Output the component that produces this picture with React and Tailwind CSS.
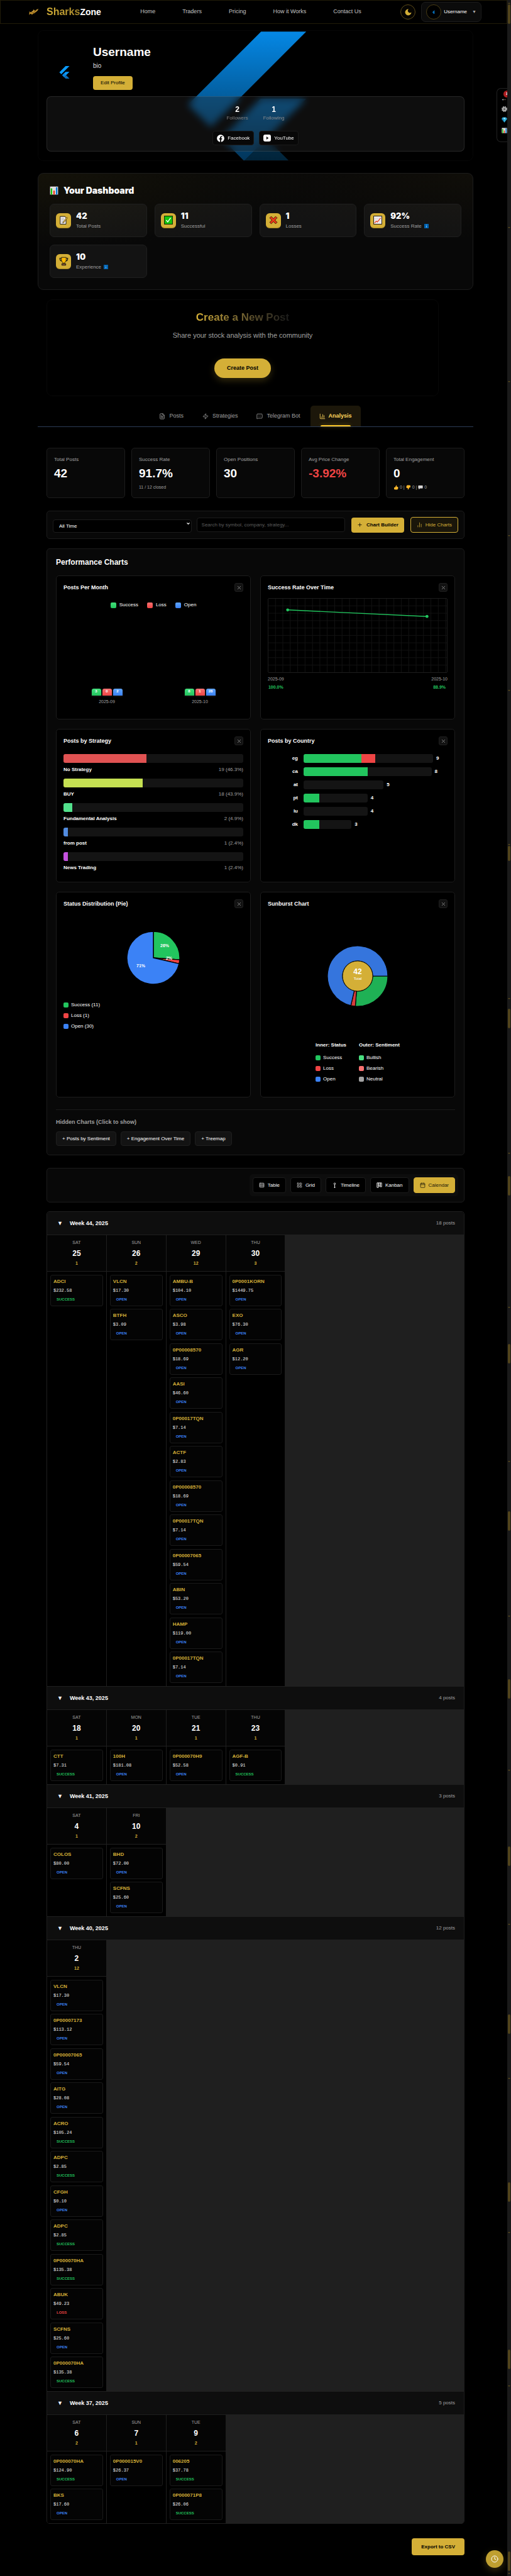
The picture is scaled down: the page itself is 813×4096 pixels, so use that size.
import React from "react";
import { FileText, Zap, MessageSquareMore, ChartColumn, ChartNoAxesColumn, Plus, Rows4, LayoutGrid, Calendar, Clock, ChevronDown, X } from "lucide-react";
import { FaFacebook } from "react-icons/fa";

/* ---------- drawings ---------- */

function FlutterMark({ className }) {
  return (
    <svg viewBox="0 0 256 317" className={className} aria-hidden="true">
      <path d="M157.7 0 0 157.7l48.8 48.8L255.3 0z" fill="#0a9bff" />
      <path d="M156.6 145.4 72.1 229.8l49 49.7 48.7-48.7 85.5-85.4z" fill="#0a9bff" />
      <path d="m121.1 279.5 37.1 37.1h97.1l-85.5-85.8z" fill="#0a6cb8" />
      <path d="m71.6 230.4 48.8-48.8 49.4 49.2-48.7 48.7z" fill="#0b82dc" />
    </svg>
  );
}

function CoverArt() {
  return (
    <svg viewBox="0 0 693 208" preserveAspectRatio="xMidYMid slice" className="absolute inset-0 h-full w-full" aria-hidden="true">
      <defs>
        <linearGradient id="shade" x1="0" y1="0" x2="0" y2="1">
          <stop offset="0" stopColor="#000" stopOpacity="0.08" />
          <stop offset="1" stopColor="#000" stopOpacity="0.64" />
        </linearGradient>
      </defs>
      <g transform="translate(239 2) scale(0.738)">
        <path d="M157.7 0 0 157.7l48.8 48.8L255.3 0z" fill="#0594fa" />
        <path d="M156.6 145.4 72.1 229.8l49 49.7 48.7-48.7 85.5-85.4z" fill="#0594fa" />
        <path d="m121.1 279.5 37.1 37.1h97.1l-85.5-85.8z" fill="#04639f" />
      </g>
      <rect width="693" height="208" fill="url(#shade)" />
    </svg>
  );
}

function SharkLogo() {
  return (
    <svg viewBox="0 0 30 22" className="h-[12px] w-[16px]" aria-hidden="true">
      <path d="M1 9c2 1 3 3 5 3 3-1 4-4 7-5l1-4 3 4c3 0 4-2 7-4l1 1 3-3c0 4-4 8-8 11-2 2-5 3-8 4l-3 4-1-3c-2 0-3-1-4-1-1 2-2 3-3 4l0-5C2 13 2 11 1 9z" fill="#c8952c" />
      <path d="M7 13c5 1 9-2 13-6l4-2M19 12l-4 6M12 9l-1 3" fill="none" stroke="#3d2808" strokeWidth="1.2" />
      <path d="M8 12c3-1 4-3 7-4M23 6l4-3" fill="none" stroke="#ffd873" strokeWidth="1" />
    </svg>
  );
}

function Moon() {
  return (
    <svg viewBox="0 0 20 20" className="size-[11px]" aria-hidden="true">
      <path d="M11 1a9 9 0 1 0 8 9 6 6 0 0 1-8-9z" fill="#d4af37" />
    </svg>
  );
}

function BarsEmoji({ className }) {
  return (
    <svg viewBox="0 0 24 24" className={className} aria-hidden="true">
      <rect x="0.5" y="0.5" width="23" height="23" fill="#e9e4e4" stroke="#222" />
      <path d="M6 1v22M12 1v22M18 1v22M1 8h22M1 16h22" stroke="#cfc8c8" />
      <rect x="3" y="6" width="4" height="17" fill="#16c60c" />
      <rect x="10" y="12" width="4" height="11" fill="#f03a17" />
      <rect x="17" y="3" width="4" height="20" fill="#0078d7" />
    </svg>
  );
}

function MemoEmoji() {
  return (
    <svg viewBox="0 0 24 24" className="size-[14px]" aria-hidden="true">
      <path d="M3 2h13l3 4v17H3z" fill="#f4f1f1" stroke="#111" strokeWidth="1.6" />
      <path d="M6 7h8M6 11h8M6 15h6M6 19h5" stroke="#999" strokeWidth="1.4" />
      <path d="M21 4 11 17l-1 3 3-1L23 6z" fill="#ffc83d" stroke="#111" strokeWidth="1" />
    </svg>
  );
}

function CheckEmoji() {
  return (
    <svg viewBox="0 0 24 24" className="size-[14px]" aria-hidden="true">
      <rect x="1" y="1" width="22" height="22" fill="#16c60c" stroke="#0b2b08" strokeWidth="1.8" />
      <path d="m6 12 4 5 8-11" fill="none" stroke="#fff" strokeWidth="2.2" />
    </svg>
  );
}

function CrossEmoji() {
  return (
    <svg viewBox="0 0 24 24" className="size-[14px]" aria-hidden="true">
      <path d="m6 2 6 6 6-6 4 4-6 6 6 6-4 4-6-6-6 6-4-4 6-6-6-6z" fill="#f03a17" stroke="#2b0a04" strokeWidth="1.6" />
    </svg>
  );
}

function TrendEmoji() {
  return (
    <svg viewBox="0 0 24 24" className="size-[14px]" aria-hidden="true">
      <rect x="1" y="1" width="22" height="22" fill="#f2eeee" stroke="#111" strokeWidth="1.6" />
      <path d="M7 2v20M12 2v20M17 2v20M2 8h20M2 14h20" stroke="#d5cfcf" />
      <path d="m3 20 5-5 3 2 9-11" fill="none" stroke="#f03a17" strokeWidth="2" />
    </svg>
  );
}

function TrophyEmoji() {
  return (
    <svg viewBox="0 0 24 24" className="size-[15px]" aria-hidden="true">
      <path d="M6 4H2c0 5 2 7 5 7M18 4h4c0 5-2 7-5 7" fill="none" stroke="#111" strokeWidth="1.8" />
      <path d="M6 2h12v7c0 3-2 5-4 6v3h-4v-3c-2-1-4-3-4-6z" fill="#ffb900" stroke="#111" strokeWidth="1.4" />
      <path d="M7 18h10v4H7z" fill="#8e562e" stroke="#111" strokeWidth="1.4" />
    </svg>
  );
}

function InfoEmoji() {
  return (
    <svg viewBox="0 0 16 16" className="size-[7px]" aria-hidden="true">
      <rect width="16" height="16" fill="#0063b1" />
      <path d="M8 3v2M8 7v6" stroke="#9fd2ff" strokeWidth="2" />
    </svg>
  );
}

function Thumb({ down }) {
  return (
    <svg viewBox="0 0 16 16" className={down ? "size-[8px] rotate-180" : "size-[8px]"} aria-hidden="true">
      <path d="M2 8h3l4-7c2 0 2 2 1 5h4c2 2 1 8-2 9H6L2 14z" fill="#ffb72b" />
    </svg>
  );
}

function SpeechEmoji() {
  return (
    <svg viewBox="0 0 16 16" className="size-[8px]" aria-hidden="true">
      <path d="M1 2h14v9H6l-3 4v-4H1z" fill="#e8e6e6" />
      <path d="M4 6.500h1.500M7.300 6.500h1.500M10.500 6.500h1.500" stroke="#555" strokeWidth="1.500" />
    </svg>
  );
}

function GearEmoji() {
  return (
    <svg viewBox="0 0 24 24" className="size-[9px]" aria-hidden="true">
      <circle cx="12" cy="12" r="10" fill="none" stroke="#b9b9b9" strokeWidth="4" strokeDasharray="5 2.850" />
      <circle cx="12" cy="12" r="9" fill="#b9b9b9" />
      <circle cx="12" cy="12" r="5.500" fill="none" stroke="#777" strokeWidth="1.500" />
      <circle cx="12" cy="12" r="2.600" fill="#111" />
    </svg>
  );
}

function GemEmoji() {
  return (
    <svg viewBox="0 0 24 24" className="size-[9px]" aria-hidden="true">
      <path d="M5 1h14l5 7-12 15L0 8z" fill="#2aa8d8" />
      <path d="M8 8l4-6 4 6z" fill="#d8f2fb" />
      <path d="M8 8h8l-4 15z" fill="#39c2e6" />
      <path d="M0 8h8l4 15z" fill="#1b83b8" />
    </svg>
  );
}

function YouTubeIcon() {
  return (
    <svg viewBox="0 0 20 18" className="h-[11px] w-[12px]" aria-hidden="true">
      <rect width="20" height="18" rx="5" fill="#fff" />
      <path d="m8 5 6 4-6 4z" fill="#111" />
    </svg>
  );
}

function TimelineIcon() {
  return (
    <svg viewBox="0 0 16 16" className="size-[9px]" fill="none" stroke="currentColor" strokeWidth="1.600" aria-hidden="true">
      <circle cx="8" cy="4" r="2.200" />
      <path d="M8 6v6" />
      <circle cx="8" cy="14" r="1.200" fill="currentColor" />
    </svg>
  );
}

function KanbanIcon() {
  return (
    <svg viewBox="0 0 16 16" className="size-[9px]" fill="none" stroke="currentColor" strokeWidth="1.600" aria-hidden="true">
      <path d="M1.500 1.500h4v13h-4zM5.500 1.500h5v9h-5zM10.500 1.500h4v11h-4z" />
    </svg>
  );
}

function arcPath(cx, cy, r0, r1, from, to) {
  const pt = (r, t) => {
    const a = t * Math.PI * 2;
    return (cx + r * Math.cos(a)).toFixed(2) + " " + (cy + r * Math.sin(a)).toFixed(2);
  };
  const big = to - from > 0.5 ? 1 : 0;
  return `M${pt(r0, from)}L${pt(r1, from)}A${r1} ${r1} 0 ${big} 1 ${pt(r1, to)}L${pt(r0, to)}A${r0} ${r0} 0 ${big} 0 ${pt(r0, from)}Z`;
}

/* ---------- data ---------- */

const O = "OPEN";
const S = "SUCCESS";
const L = "LOSS";

const weeks = [
  {
    name: "Week 44, 2025",
    posts: 18,
    days: [
      { day: "SAT", date: 25, items: [["ADCI", "$232.58", S]] },
      { day: "SUN", date: 26, items: [["VLCN", "$17.30", O], ["BTFH", "$3.09", O]] },
      {
        day: "WED",
        date: 29,
        items: [
          ["AMBU-B", "$104.10", O], ["ASCO", "$3.98", O], ["0P00008570", "$18.69", O], ["AASI", "$46.60", O],
          ["0P00017TQN", "$7.14", O], ["ACTF", "$2.83", O], ["0P00008570", "$18.69", O], ["0P00017TQN", "$7.14", O],
          ["0P00007065", "$59.54", O], ["ABIN", "$53.20", O], ["HAMP", "$119.00", O], ["0P00017TQN", "$7.14", O],
        ],
      },
      { day: "THU", date: 30, items: [["0P0001KORN", "$1449.75", O], ["EXO", "$76.30", O], ["AGR", "$12.20", O]] },
    ],
  },
  {
    name: "Week 43, 2025",
    posts: 4,
    days: [
      { day: "SAT", date: 18, items: [["CTT", "$7.31", S]] },
      { day: "MON", date: 20, items: [["100H", "$181.08", O]] },
      { day: "TUE", date: 21, items: [["0P000070H9", "$52.58", O]] },
      { day: "THU", date: 23, items: [["AGF-B", "$0.91", S]] },
    ],
  },
  {
    name: "Week 41, 2025",
    posts: 3,
    days: [
      { day: "SAT", date: 4, items: [["COLOS", "$80.00", O]] },
      { day: "FRI", date: 10, items: [["BHD", "$72.00", O], ["SCFNS", "$25.60", O]] },
    ],
  },
  {
    name: "Week 40, 2025",
    posts: 12,
    days: [
      {
        day: "THU",
        date: 2,
        items: [
          ["VLCN", "$17.30", O], ["0P00007173", "$113.12", O], ["0P00007065", "$59.54", O], ["AITG", "$28.08", O],
          ["ACRO", "$105.24", S], ["ADPC", "$2.85", S], ["CFGH", "$0.10", O], ["ADPC", "$2.85", S],
          ["0P000070HA", "$135.38", S], ["ABUK", "$49.23", L], ["SCFNS", "$25.60", O], ["0P000070HA", "$135.38", S],
        ],
      },
    ],
  },
  {
    name: "Week 37, 2025",
    posts: 5,
    days: [
      { day: "SAT", date: 6, items: [["0P000070HA", "$124.90", S], ["BKS", "$17.60", O]] },
      { day: "SUN", date: 7, items: [["0P000015V0", "$26.37", O]] },
      { day: "TUE", date: 9, items: [["006205", "$37.78", S], ["0P000071P8", "$26.06", S]] },
    ],
  },
];

const statusColor = { OPEN: "text-[#3b82f6]", SUCCESS: "text-[#22c55e]", LOSS: "text-[#ef4444]" };

const strategies = [
  ["No Strategy", "19 (46.3%)", 46.3, "bg-[#e05252]"],
  ["BUY", "18 (43.9%)", 43.9, "bg-[#c5e052]"],
  ["Fundamental Analysis", "2 (4.9%)", 5, "bg-[#52e08c]"],
  ["from post", "1 (2.4%)", 2.5, "bg-[#528ce0]"],
  ["News Trading", "1 (2.4%)", 2.5, "bg-[#c552e0]"],
];

const countries = [
  ["eg", 9, 4, 1],
  ["ca", 8, 4, 0],
  ["at", 5, 0, 0],
  ["pt", 4, 1, 0],
  ["lu", 4, 0, 0],
  ["dk", 3, 1, 0],
];

const scrollThumbs = [7, 1345, 1604, 1870, 2137, 2403, 2670, 2936, 3203, 3470, 3736, 4057];
const scrollArrows = [361, 606, 851, 1097, 1342, 1587, 1833, 2078, 2323, 2569, 2814, 3059, 3304, 3549, 3793, 4091];

/* ---------- parts ---------- */

function Header() {
  return (
    <header className="flex h-[38px] items-center justify-between border border-[#211b08] pr-[40px] pl-[45px]">
      <a href="#" className="flex items-center gap-3">
        <SharkLogo />
        <span className="flex items-baseline leading-none font-bold">
          <span className="bg-linear-to-r from-[#d4af37] to-[#a98a2c] bg-clip-text text-[16px] text-transparent">Sharks</span>
          <span className="text-[14px] text-white">Zone</span>
        </span>
      </a>
      <nav className="flex gap-[43px] text-[9px] text-[#c4c4c4]">
        <a href="#">Home</a>
        <a href="#">Traders</a>
        <a href="#">Pricing</a>
        <a href="#">How it Works</a>
        <a href="#">Contact Us</a>
      </nav>
      <div className="flex items-center gap-[9px]">
        <button aria-label="Toggle theme" className="flex size-6 items-center justify-center rounded-full border border-[#5c4b18] bg-[#060502]">
          <Moon />
        </button>
        <button className="flex h-8 items-center gap-1 rounded-[7px] border border-[#1c1c1c] bg-[#0b0b0b] px-[7px]">
          <span className="flex size-6 items-center justify-center rounded-full border border-[#4a3d14] bg-black">
            <FlutterMark className="h-[5px] w-[6px]" />
          </span>
          <span className="text-[8px] font-medium text-white">Username</span>
          <span className="pl-1 text-[7px] text-[#aaa]">▼</span>
        </button>
      </div>
    </header>
  );
}

function Profile() {
  return (
    <section className="relative mt-[10px] flex flex-col overflow-hidden rounded-[9px] border border-[#070707] px-[13px] pb-[14px]">
      <CoverArt />
      <div className="relative flex items-end pt-[23px] pl-[20px]">
        <FlutterMark className="mr-[37px] mb-[28px] h-5 w-[17px]" />
        <div className="pb-[10px]">
          <h1 className="text-[19px] leading-[22px] font-bold text-white">Username</h1>
          <p className="mt-[5px] text-[10px] leading-[12px] text-[#ddd]">bio</p>
          <button className="mt-[10px] flex h-[22px] items-center rounded-[4px] bg-[#d4af37] px-3 text-[8px] text-black">Edit Profile</button>
        </div>
      </div>
      <div className="relative rounded-[7px] border border-[#ffffff1a] bg-[#28282859] pt-[13px] pb-[9px] backdrop-blur-[6px]">
        <div className="flex justify-center gap-6 text-center">
          <div>
            <div className="text-[12px] leading-[14px] font-bold text-white">2</div>
            <div className="text-[8px] leading-[14px] text-[#808080]">Followers</div>
          </div>
          <div>
            <div className="text-[12px] leading-[14px] font-bold text-white">1</div>
            <div className="text-[8px] leading-[14px] text-[#8c8c8c]">Following</div>
          </div>
        </div>
        <div className="mt-[13px] flex justify-center gap-2 text-[8px] text-white">
          <a href="#" className="flex h-[23px] items-center gap-[5px] rounded-[4px] border border-[#1a1a1a] bg-[#080808] px-[6px]">
            <FaFacebook className="size-3" />
            Facebook
          </a>
          <a href="#" className="flex h-[23px] items-center gap-[5px] rounded-[4px] border border-[#1a1a1a] bg-[#080808] px-[6px]">
            <YouTubeIcon />
            YouTube
          </a>
        </div>
      </div>
    </section>
  );
}

function DashCard({ icon, value, label, info }) {
  return (
    <div className="flex h-[53px] items-center gap-2 rounded-[7px] border border-[#1f1f1f] bg-[#ffffff0c] px-[9px]">
      <div className="flex size-6 shrink-0 items-center justify-center rounded-[6px] border-b border-[#a38422] bg-[#d4af37]">{icon}</div>
      <div>
        <div className="font-['Inter',sans-serif] text-[13px] leading-[16px] font-black text-white">{value}</div>
        <div className="mt-[2px] flex items-center gap-1 text-[8px] leading-[14px] text-[#a0a0a0]">
          {label}
          {info && <InfoEmoji />}
        </div>
      </div>
    </div>
  );
}

function Dashboard() {
  return (
    <section className="mt-[19px] rounded-[9px] border border-[#1c1c1c] bg-[#080808] bg-[radial-gradient(ellipse_at_top_left,#141209_0,transparent_45%),radial-gradient(ellipse_at_top_right,#100e09_0,transparent_40%)] px-[18px] pt-[19px] pb-[18px]">
      <h2 className="flex items-center gap-2 font-['Inter',sans-serif] text-[14px] leading-[16px] font-black text-white">
        <BarsEmoji className="size-[14px]" />
        Your Dashboard
      </h2>
      <div className="mt-[13px] grid grid-cols-4 gap-3">
        <DashCard icon={<MemoEmoji />} value="42" label="Total Posts" />
        <DashCard icon={<CheckEmoji />} value="11" label="Successful" />
        <DashCard icon={<CrossEmoji />} value="1" label="Losses" />
        <DashCard icon={<TrendEmoji />} value="92%" label="Success Rate" info />
        <DashCard icon={<TrophyEmoji />} value="10" label="Experience" info />
      </div>
    </section>
  );
}

function CreatePost() {
  return (
    <section className="mt-[15px] mr-[55px] ml-[14px] flex flex-col items-center rounded-[9px] border border-[#080808] pt-[18px] pb-[28px]">
      <h2 className="bg-linear-to-r from-[#d4af37] to-[#1a1a1a] bg-clip-text text-[17px] leading-[20px] font-bold text-transparent">Create a New Post</h2>
      <p className="mt-[11px] text-[11px] leading-[14px] text-[#a0a0a0]">Share your stock analysis with the community</p>
      <button className="mt-[30px] h-[31px] rounded-full bg-[#d4af37] px-5 text-[9px] font-bold text-black shadow-[0_4px_12px_#d4af3740]">Create Post</button>
    </section>
  );
}

function Tabs() {
  const tab = "flex items-center gap-[6px] px-[14px] text-[9px] text-[#a0a0a0]";
  return (
    <div className="mt-[15px] flex h-[34px] justify-center gap-[2px] border-b border-[#2c3b55]" role="tablist">
      <button role="tab" className={tab}><FileText className="size-[10px]" />Posts</button>
      <button role="tab" className={tab}><Zap className="size-[10px]" />Strategies</button>
      <button role="tab" className={tab}><MessageSquareMore className="size-[10px]" />Telegram Bot</button>
      <button role="tab" aria-selected="true" className="relative flex items-center gap-[5px] rounded-t-[5px] bg-[#1c170a] px-[14px] text-[9px] font-bold text-[#ffd65a]">
        <ChartColumn className="size-[10px]" />
        Analysis
        <span className="absolute inset-x-4 bottom-0 h-[2px] rounded-t bg-[#ffc928] shadow-[0_0_6px_#ffc92866]" />
      </button>
    </div>
  );
}

function Stat({ label, value, red, children }) {
  return (
    <div className="h-20 rounded-[5px] border border-[#1c1c1c] bg-[#080808] px-[11px] pt-[12px]">
      <div className="text-[8px] leading-[12px] text-[#a0a0a0]">{label}</div>
      <div className={red ? "mt-[5px] text-[19px] leading-[22px] font-bold text-[#ef4444]" : "mt-[5px] text-[19px] leading-[22px] font-bold text-white"}>{value}</div>
      <div className="mt-[6px] flex items-center gap-[2px] text-[7px] leading-[10px] text-[#a0a0a0]">{children}</div>
    </div>
  );
}

function FilterBar() {
  return (
    <div className="mt-5 flex h-[45px] items-center gap-[10px] rounded-[5px] border border-[#1c1c1c] bg-[#080808] px-[9px]">
      <div className="flex min-w-0 flex-1 items-center gap-2">
        <div className="relative min-w-0 flex-1">
          <select aria-label="Period" className="h-[21px] w-full appearance-none rounded-[4px] border border-[#1c1c1c] bg-black px-[9px] text-[8px] text-white">
            <option>All Time</option>
          </select>
          <ChevronDown className="pointer-events-none absolute top-[7px] right-[2px] size-[7px] text-white" strokeWidth={4} />
        </div>
        <input aria-label="Search" placeholder="Search by symbol, company, strategy..." className="h-[23px] min-w-0 flex-1 rounded-[4px] border border-[#1c1c1c] bg-black px-[7px] text-[8px] text-white placeholder:text-[#5c5c5c]" />
      </div>
      <button className="flex h-6 items-center gap-[6px] rounded-[4px] bg-[#d4af37] px-[9px] text-[8px] font-bold text-black">
        <Plus className="size-[9px]" />
        Chart Builder
      </button>
      <button className="flex h-[25px] items-center gap-[5px] rounded-[4px] border border-[#d4af37] bg-[#1a160a] px-[9px] text-[8px] text-[#d4af37]">
        <ChartNoAxesColumn className="size-[9px]" />
        Hide Charts
      </button>
    </div>
  );
}

function ChartCard({ title, className, children }) {
  return (
    <article className={"rounded-[5px] border border-[#1c1c1c] bg-black px-[11px] pt-[11px] " + className}>
      <div className="flex h-[14px] items-center justify-between">
        <h4 className="text-[9px] leading-[12px] font-bold text-white">{title}</h4>
        <button aria-label={"Hide " + title} className="flex size-[14px] items-center justify-center rounded-[3px] border border-[#1f1f1f] bg-[#121212] text-[#999]">
          <X className="size-[9px]" />
        </button>
      </div>
      {children}
    </article>
  );
}

function Swatch({ color, label }) {
  return (
    <div className="flex items-center gap-1 text-[8px] leading-[10px] text-white">
      <span className={"size-2 rounded-[2px] " + color} />
      {label}
    </div>
  );
}

function PostsPerMonth() {
  const months = [
    ["2025-09", [3, 0, 2]],
    ["2025-10", [8, 1, 28]],
  ];
  const fills = ["from-[#42e07c] to-[#22c55e]", "from-[#f87171] to-[#ef4444]", "from-[#60a5fa] to-[#3b82f6]"];
  const names = ["Success", "Loss", "Open"];
  return (
    <ChartCard title="Posts Per Month" className="h-[229px]">
      <div className="mt-4 flex justify-center gap-[14px] text-[8px] leading-[10px] text-white">
        {names.map((n, i) => (
          <div key={n} className="flex items-center gap-[5px]">
            <span className={"size-[9px] rounded-[2px] bg-linear-to-b " + fills[i]} />
            {n}
          </div>
        ))}
      </div>
      <div className="mt-[128px] grid grid-cols-2 gap-[10px]">
        {months.map(([m, values]) => (
          <div key={m} className="flex flex-col items-center">
            <div className="flex gap-[2px]">
              {values.map((v, i) => (
                <div key={i} className={"h-[11px] w-[15px] rounded-t-[3px] bg-linear-to-b text-center text-[6px] leading-[9px] font-bold text-white shadow-[0_1px_3px_#ffffff22] " + fills[i]}>
                  {v}
                </div>
              ))}
            </div>
            <div className="mt-[5px] text-[7px] leading-[10px] text-[#a0a0a0]">{m}</div>
          </div>
        ))}
      </div>
    </ChartCard>
  );
}

function SuccessRate() {
  return (
    <ChartCard title="Success Rate Over Time" className="h-[229px]">
      <svg viewBox="0 0 287 118" className="mt-[10px] w-full rounded-[2px] border border-[#1c1c1c]" aria-hidden="true">
        <defs>
          <pattern id="grid" width="11.900" height="11.900" patternUnits="userSpaceOnUse">
            <path d="M11.400 0V11.900M0 11.400H11.900" stroke="#111" strokeWidth="1" fill="none" />
          </pattern>
        </defs>
        <rect width="287" height="118" fill="url(#grid)" />
        <path d="M31 18 255 28.500" stroke="#22c55e" strokeWidth="1.400" />
        <circle cx="31" cy="18" r="2.400" fill="#22c55e" />
        <circle cx="255" cy="28.500" r="2.400" fill="#22c55e" />
      </svg>
      <div className="mt-[5px] flex justify-between text-center text-[7px] leading-[10px] text-[#a0a0a0]">
        <div>
          2025-09
          <div className="mt-[3px] font-bold text-[#22c55e]">100.0%</div>
        </div>
        <div>
          2025-10
          <div className="mt-[3px] font-bold text-[#22c55e]">88.9%</div>
        </div>
      </div>
    </ChartCard>
  );
}

function ByStrategy() {
  return (
    <ChartCard title="Posts by Strategy" className="h-[244px]">
      <div className="mt-[14px] flex flex-col gap-2">
        {strategies.map(([name, count, pct, color]) => (
          <div key={name}>
            <div className="h-[14px] overflow-hidden rounded-[3px] bg-[#141414]">
              <div className={"h-full " + color} style={{ width: pct + "%" }} />
            </div>
            <div className="mt-[5px] flex justify-between text-[8px] leading-[12px]">
              <span className="font-bold text-white">{name}</span>
              <span className="text-[#a0a0a0]">{count}</span>
            </div>
          </div>
        ))}
      </div>
    </ChartCard>
  );
}

function ByCountry() {
  return (
    <ChartCard title="Posts by Country" className="h-[244px]">
      <div className="mt-[14px] flex flex-col gap-[7px] text-[8px] leading-[14px] font-bold text-white">
        {countries.map(([code, total, win, loss]) => (
          <div key={code} className="flex gap-[9px]">
            <div className="w-12 text-right">{code}</div>
            <div className="flex min-w-0 flex-1 gap-[5px]">
              <div className="flex h-[14px] overflow-hidden rounded-[3px] bg-[#141414]" style={{ width: (total / 9) * 100 + "%" }}>
                <div className="bg-[#22c55e]" style={{ width: (win / total) * 100 + "%" }} />
                <div className="bg-[#ef4444]" style={{ width: (loss / total) * 100 + "%" }} />
              </div>
              <div className="w-[18px] shrink-0">{total}</div>
            </div>
          </div>
        ))}
      </div>
    </ChartCard>
  );
}

function StatusPie() {
  return (
    <ChartCard title="Status Distribution (Pie)" className="h-[327px]">
      <div className="flex justify-center pt-[37px]">
        <svg viewBox="0 0 84 84" className="size-[84px]" role="img" aria-label="Status distribution">
          <g stroke="#000" strokeWidth="1.400">
            <path d={arcPath(42, 42, 0, 42, -0.25, 0.012)} fill="#22c55e" />
            <path d={arcPath(42, 42, 0, 42, 0.012, 0.036)} fill="#ef4444" />
            <path d={arcPath(42, 42, 0, 42, 0.036, 0.75)} fill="#3b82f6" />
          </g>
          <g className="text-[7px] font-bold" fill="#fff" textAnchor="middle">
            <text x="60" y="25">26%</text>
            <text x="67" y="45">2%</text>
            <text x="22" y="57">71%</text>
          </g>
        </svg>
      </div>
      <div className="mt-[28px] flex flex-col gap-[7px]">
        <Swatch color="bg-[#22c55e]" label="Success (11)" />
        <Swatch color="bg-[#ef4444]" label="Loss (1)" />
        <Swatch color="bg-[#3b82f6]" label="Open (30)" />
      </div>
    </ChartCard>
  );
}

function Sunburst() {
  return (
    <ChartCard title="Sunburst Chart" className="h-[327px]">
      <div className="flex justify-center pt-[60px]">
        <svg viewBox="0 0 96 96" className="size-[96px]" role="img" aria-label="Status and sentiment">
          <g stroke="#000" strokeWidth="1.200">
            <path d={arcPath(48, 48, 24, 48, 0, 0.262)} fill="#1fb155" />
            <path d={arcPath(48, 48, 24, 48, 0.262, 0.286)} fill="#d73d3d" />
            <path d={arcPath(48, 48, 24, 48, 0.286, 1)} fill="#3575dd" />
            <circle cx="48" cy="48" r="24" fill="#d4af37" strokeWidth="0.800" />
          </g>
          <g fill="#fff" textAnchor="middle">
            <text x="48" y="45" className="text-[12px] font-bold">42</text>
            <text x="48" y="54" className="text-[6px]">Total</text>
          </g>
        </svg>
      </div>
      <div className="mt-[57px] flex justify-center gap-5">
        <div className="flex flex-col gap-[7px]">
          <div className="mb-[3px] text-[8px] leading-[10px] font-bold text-white">Inner: Status</div>
          <Swatch color="bg-[#22c55e]" label="Success" />
          <Swatch color="bg-[#ef4444]" label="Loss" />
          <Swatch color="bg-[#3b82f6]" label="Open" />
        </div>
        <div className="flex flex-col gap-[7px]">
          <div className="mb-[3px] text-[8px] leading-[10px] font-bold text-white">Outer: Sentiment</div>
          <Swatch color="bg-[#4ade80]" label="Bullish" />
          <Swatch color="bg-[#f87171]" label="Bearish" />
          <Swatch color="bg-[#a3a3a3]" label="Neutral" />
        </div>
      </div>
    </ChartCard>
  );
}

function Charts() {
  return (
    <section className="mt-[15px] rounded-[5px] border border-[#1c1c1c] bg-[#080808] px-[14px] pt-[14px] pb-[14px]">
      <h3 className="text-[12px] leading-[14px] font-bold text-white">Performance Charts</h3>
      <div className="mt-[14px] grid grid-cols-2 gap-[15px]">
        <PostsPerMonth />
        <SuccessRate />
        <ByStrategy />
        <ByCountry />
        <StatusPie />
        <Sunburst />
      </div>
      <div className="mt-[19px] border-t border-[#1c1c1c] pt-[13px]">
        <h4 className="text-[9px] leading-[12px] font-bold text-[#a0a0a0]">Hidden Charts (Click to show)</h4>
        <div className="mt-[9px] flex gap-[7px]">
          {["+ Posts by Sentiment", "+ Engagement Over Time", "+ Treemap"].map((t) => (
            <button key={t} className="h-[23px] rounded-[4px] border border-[#1f1f1f] bg-[#131313] px-[9px] text-[8px] text-white">
              {t}
            </button>
          ))}
        </div>
      </div>
    </section>
  );
}

function ViewBar() {
  const btn = "flex h-[25px] items-center gap-[5px] rounded-[4px] border px-[9px] text-[8px] ";
  const dark = btn + "border-[#1c1c1c] bg-black text-white";
  return (
    <div className="mt-5 flex h-[55px] items-center justify-end rounded-[5px] border border-[#1c1c1c] bg-[#080808] px-[9px]">
      <div className="flex gap-[7px] rounded-[5px] bg-[#0d0d0d] p-[5px]">
        <button className={dark}><Rows4 className="size-[9px] text-[#ccc]" />Table</button>
        <button className={dark}><LayoutGrid className="size-[9px] text-[#ccc]" />Grid</button>
        <button className={dark}><TimelineIcon />Timeline</button>
        <button className={dark}><KanbanIcon />Kanban</button>
        <button className={btn + "border-[#d4af37] bg-[#d4af37] text-[#1a1608]"}><Calendar className="size-[9px]" />Calendar</button>
      </div>
    </div>
  );
}

function Week({ week }) {
  return (
    <section>
      <div className="flex h-[37px] items-center justify-between border-b border-[#1f1f1f] bg-[#0e0e0e] pr-[14px] pl-[16px]">
        <h3 className="flex items-center gap-[12px] text-[9px] leading-[12px] font-bold text-white">
          <span className="w-2 text-[9px]">▼</span>
          {week.name}
        </h3>
        <span className="text-[8px] text-[#a0a0a0]">{week.posts} posts</span>
      </div>
      <div className="grid grid-cols-7 gap-px border-b border-[#1f1f1f] bg-[#1f1f1f]">
        {week.days.map((d) => (
          <div key={d.day} className="flex flex-col bg-black">
            <div className="border-b border-[#1f1f1f] bg-[#050505] pt-[6px] pb-[6px] text-center">
              <div className="text-[7px] leading-[12px] font-medium text-[#a0a0a0]">{d.day}</div>
              <div className="mt-[3px] text-[12px] leading-[16px] font-bold text-white">{d.date}</div>
              <div className="mt-[2px] text-[7px] leading-[12px] font-bold text-[#d4af37]">{d.items.length}</div>
            </div>
            <div className="p-[5px]">
              {d.items.map(([sym, price, st], i) => (
                <a key={i} href="#" className="block h-[50px] rounded-[3px] border border-[#1a1a1a] bg-[#040404] px-[4px] pt-[4px] not-last:odd:mb-[4px] not-last:even:mb-[5px]">
                  <div className="text-[8px] leading-[12px] font-bold text-[#d4af37]">{sym}</div>
                  <div className="mt-[2px] font-['Liberation_Mono',monospace] text-[7px] leading-[12px] text-[#e8e8e8]">{price}</div>
                  <div className={"mt-[3px] pl-[5px] text-[6px] leading-[10px] font-bold " + statusColor[st]}>{st}</div>
                </a>
              ))}
            </div>
          </div>
        ))}
      </div>
    </section>
  );
}

function SideDock() {
  return (
    <div className="absolute top-[140px] right-[6px] h-[86px] w-[17px] overflow-hidden rounded-l-[7px] border border-r-0 border-[#222] bg-black">
      <span className="absolute top-[3px] left-[10px] flex size-[11px] items-center justify-center rounded-full bg-[#b01e1e] text-[6px] font-bold text-white">1</span>
      <div className="flex w-[22px] flex-col items-center gap-[8px] pt-[12px]">
        <span className="text-[10px] leading-[8px] text-white">←</span>
        <GearEmoji />
        <GemEmoji />
        <BarsEmoji className="size-[9px]" />
      </div>
    </div>
  );
}

function ScrollTrack() {
  return (
    <div className="absolute inset-y-0 right-0 w-[6px] overflow-hidden bg-[#1a1a1a]" aria-hidden="true">
      <span className="absolute top-[4px] left-[1px] h-0 w-0 border-x-2 border-b-2 border-x-transparent border-b-[#5c4c1d]" />
      {scrollThumbs.map((y, i) => (
        <span key={y} className={"absolute left-[1px] w-1 rounded-full bg-[#52441c] " + (i === 1 ? "h-[24px]" : "h-[31px]")} style={{ top: y }} />
      ))}
      {scrollArrows.map((y) => (
        <span key={y} className="absolute left-[1px] h-0 w-0 border-x-2 border-t-2 border-x-transparent border-t-[#5c4c1d]" style={{ top: y }} />
      ))}
    </div>
  );
}

export default function App() {
  return (
    <div className="relative min-h-screen bg-black font-['Liberation_Sans',Arial,sans-serif] leading-normal">
      <div className="pr-[6px]">
        <Header />
      </div>
      <main className="px-[60px]">
        <Profile />
        <Dashboard />
        <CreatePost />
        <Tabs />
        <div className="mt-[33px] px-[14px]">
          <div className="grid grid-cols-5 gap-[10px]">
            <Stat label="Total Posts" value="42" />
            <Stat label="Success Rate" value="91.7%">11 / 12 closed</Stat>
            <Stat label="Open Positions" value="30" />
            <Stat label="Avg Price Change" value="-3.92%" red />
            <Stat label="Total Engagement" value="0">
              <Thumb /> 0 | <Thumb down /> 0 | <SpeechEmoji /> 0
            </Stat>
          </div>
          <FilterBar />
          <Charts />
          <ViewBar />
          <div className="mt-[14px] overflow-hidden rounded-[5px] border border-[#1f1f1f] border-b-0">
            {weeks.map((w) => (
              <Week key={w.name} week={w} />
            ))}
          </div>
          <div className="mt-[23px] flex justify-end">
            <button className="h-[27px] rounded-[4px] bg-[#d4af37] px-[15px] text-[8px] font-bold text-black">Export to CSV</button>
          </div>
        </div>
      </main>
      <SideDock />
      <ScrollTrack />
      <button aria-label="History" className="absolute right-[12px] bottom-[13px] flex size-7 items-center justify-center rounded-full bg-[#bf9f30] text-white shadow-[0_4px_12px_#d4af3740]">
        <Clock className="size-3" />
      </button>
    </div>
  );
}
